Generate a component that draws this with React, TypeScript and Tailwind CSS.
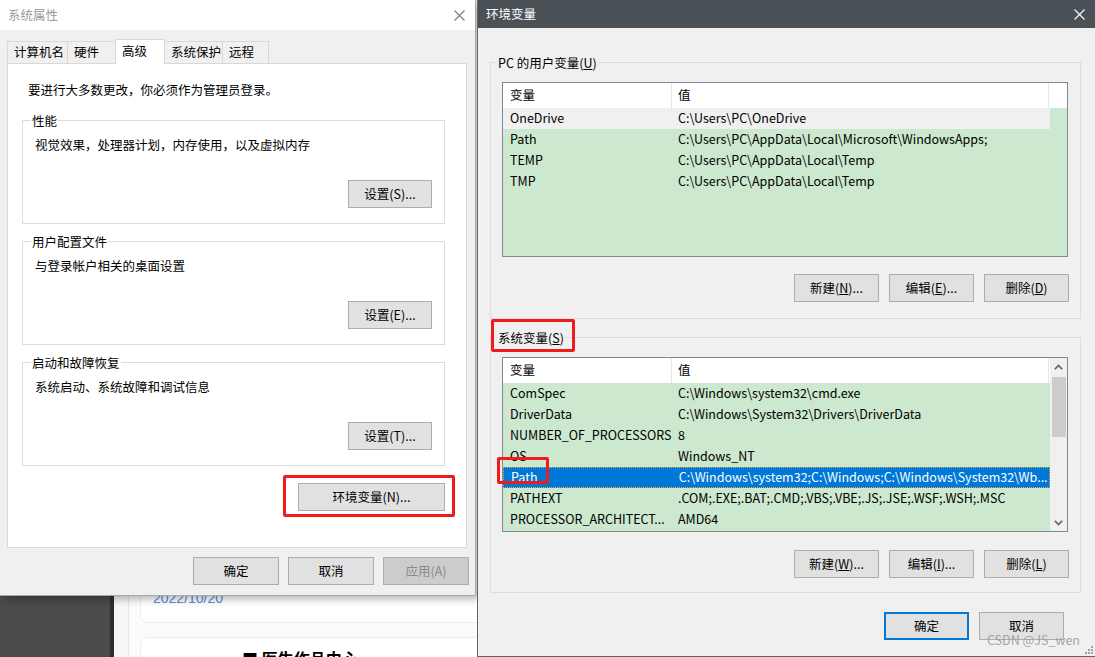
import React from 'react';

const FONT = "font-['Noto_Sans_CJK_SC',sans-serif]";

const USER_VARS: [string, string][] = [
  ['OneDrive', 'C:\\Users\\PC\\OneDrive'],
  ['Path', 'C:\\Users\\PC\\AppData\\Local\\Microsoft\\WindowsApps;'],
  ['TEMP', 'C:\\Users\\PC\\AppData\\Local\\Temp'],
  ['TMP', 'C:\\Users\\PC\\AppData\\Local\\Temp'],
];

const SYS_VARS: [string, string][] = [
  ['ComSpec', 'C:\\Windows\\system32\\cmd.exe'],
  ['DriverData', 'C:\\Windows\\System32\\Drivers\\DriverData'],
  ['NUMBER_OF_PROCESSORS', '8'],
  ['OS', 'Windows_NT'],
  ['Path', 'C:\\Windows\\system32;C:\\Windows;C:\\Windows\\System32\\Wb...'],
  ['PATHEXT', '.COM;.EXE;.BAT;.CMD;.VBS;.VBE;.JS;.JSE;.WSF;.WSH;.MSC'],
  ['PROCESSOR_ARCHITECT...', 'AMD64'],
];

function CloseIcon({ color }: { color: string }) {
  return (
    <svg width="11" height="11" viewBox="0 0 11 11">
      <path d="M0.5 0.5 L10.5 10.5 M10.5 0.5 L0.5 10.5" stroke={color} strokeWidth="1.1" />
    </svg>
  );
}

function WinButton({
  children,
  className = '',
  disabled = false,
  primary = false,
}: {
  children: React.ReactNode;
  className?: string;
  disabled?: boolean;
  primary?: boolean;
}) {
  return (
    <button
      className={`flex items-center justify-center leading-none ${
        primary ? 'border-2 border-[#0078d7]' : 'border border-[#adadad]'
      } ${disabled ? 'bg-[#cccccc] text-[#8a8a8a]' : 'bg-[#e1e1e1] text-black'} ${className}`}
    >
      {children}
    </button>
  );
}

/* Group box of the System Properties panel */
function SettingsGroup({ title, desc, button }: { title: string; desc: string; button: string }) {
  return (
    <fieldset className="h-[112px] w-[423px] border border-[#dcdcdc] px-[8px]">
      <legend className="px-[1px] leading-[17px] text-black">{title}</legend>
      <div className="px-[4px]">
        <p className="mt-[7px] leading-[17px]">{desc}</p>
        <div className="mt-[27px] flex justify-end">
          <WinButton className="h-[28px] w-[84px]">{button}</WinButton>
        </div>
      </div>
    </fieldset>
  );
}

function ListHeader() {
  return (
    <div className="flex h-[25px] items-center bg-white">
      <div className="flex h-full w-[169px] items-center border-r border-[#e5e5e5] pl-[7px]">变量</div>
      <div className="flex h-full w-[377px] items-center border-r border-[#e5e5e5] pl-[6px]">值</div>
    </div>
  );
}

function VarRow({ name, value, hover, selected }: { name: string; value: string; hover?: boolean; selected?: boolean }) {
  return (
    <div
      className={`flex h-[21px] w-[547px] items-center whitespace-nowrap ${
        selected
          ? 'border border-dotted border-[#f7a23b] bg-[#0078d7] text-white'
          : hover
          ? 'bg-[#f0f0f0]'
          : ''
      }`}
    >
      <div className="w-[169px] overflow-hidden pl-[7px]">{name}</div>
      <div className="w-[377px] overflow-hidden pl-[6px]">{value}</div>
    </div>
  );
}

function Chevron({ up }: { up?: boolean }) {
  return (
    <svg width="9" height="6" viewBox="0 0 9 6">
      <path d={up ? 'M0.8 5.2 L4.5 1.5 L8.2 5.2' : 'M0.8 0.8 L4.5 4.5 L8.2 0.8'} stroke="#606060" strokeWidth="1.6" fill="none" />
    </svg>
  );
}

function UserList() {
  return (
    <div className="h-[175px] w-[566px] overflow-hidden border border-[#828790] bg-[#cce8cf]">
      <div className="flex bg-white">
        <ListHeader />
      </div>
      {USER_VARS.map(([n, v], i) => (
        <VarRow key={n} name={n} value={v} hover={i === 0} />
      ))}
    </div>
  );
}

function SystemList() {
  return (
    <div className="flex h-[175px] w-[566px] overflow-hidden border border-[#828790] bg-[#cce8cf]">
      <div className="w-[547px]">
        <ListHeader />
        {SYS_VARS.map(([n, v], i) => (
          <VarRow key={n + i} name={n} value={v} selected={i === 4} />
        ))}
      </div>
      <div className="flex w-[17px] flex-col items-center bg-[#f0f0f0]">
        <div className="flex h-[17px] items-center justify-center">
          <Chevron up />
        </div>
        <div className="mt-[2px] h-[60px] w-[14px] bg-[#cdcdcd]" />
        <div className="flex-1" />
        <div className="flex h-[17px] items-center justify-center">
          <Chevron />
        </div>
      </div>
    </div>
  );
}

function SystemProperties() {
  const tabs = [
    { label: '计算机名', w: 'w-[61px]' },
    { label: '硬件', w: 'w-[49px]' },
    { label: '高级', w: 'w-[50px]', active: true },
    { label: '系统保护', w: 'w-[59px]' },
    { label: '远程', w: 'w-[47px]' },
  ];
  return (
    <div className="absolute left-0 top-0 w-[476px] border-r border-b border-[#a9a9a9] shadow-[3px_3px_8px_rgba(0,0,0,0.3)]">
      {/* Title bar */}
      <div className="flex h-[30px] items-center justify-between bg-white pl-[8px] pr-[10px]">
        <span className="text-[#999999]">系统属性</span>
        <CloseIcon color="#7a7a7a" />
      </div>

      <div className="h-[565px] bg-[#f0f0f0] pl-[7px] pr-[8px] pt-[9px]">
        {/* Tabs */}
        <div className="relative z-10 flex h-[24px] items-end">
          {tabs.map((t) =>
            t.active ? (
              <div
                key={t.label}
                className={`${t.w} -mb-[1px] -ml-[1px] flex h-[25px] items-start border border-b-0 border-[#d9d9d9] bg-white pl-[6px] pt-[2px]`}
              >
                {t.label}
              </div>
            ) : (
              <div
                key={t.label}
                className={`${t.w} flex h-[22px] items-center border border-b-0 border-[#d9d9d9] bg-[#f0f0f0] pl-[6px] -ml-[1px] first:ml-0`}
              >
                {t.label}
              </div>
            )
          )}
        </div>

        {/* Tab panel */}
        <div className="flex h-[485px] flex-col border border-[#d9d9d9] bg-white px-[14px] pt-[17px]">
          <p className="pl-[6px] leading-[17px]">要进行大多数更改，你必须作为管理员登录。</p>
          <div className="mt-[14px] flex flex-col gap-[9px]">
            <SettingsGroup title="性能" desc="视觉效果，处理器计划，内存使用，以及虚拟内存" button="设置(S)..." />
            <SettingsGroup title="用户配置文件" desc="与登录帐户相关的桌面设置" button="设置(E)..." />
            <SettingsGroup title="启动和故障恢复" desc="系统启动、系统故障和调试信息" button="设置(T)..." />
          </div>
          <div className="-mr-[3px] mt-[9px] self-end rounded-[2px] border-[3px] border-[#ef1c1c] pb-[3px] pl-[12px] pr-[7px] pt-[5px]">
            <WinButton className="h-[28px] w-[147px]">环境变量(N)...</WinButton>
          </div>
        </div>

        {/* Dialog buttons */}
        <div className="-mr-[2px] mt-[9px] flex justify-end gap-[9px]">
          <WinButton className="h-[28px] w-[86px]">确定</WinButton>
          <WinButton className="h-[28px] w-[86px]">取消</WinButton>
          <WinButton className="h-[28px] w-[86px]" disabled>
            应用(A)
          </WinButton>
        </div>
      </div>
    </div>
  );
}

function EnvironmentVariables() {
  return (
    <div className="absolute left-[477px] top-0 h-[657px] w-[618px] border-b border-l border-[#5f656b] bg-[#f0f0f0]">
      {/* Title bar */}
      <div className="flex h-[28px] items-center justify-between bg-[#4a5157] pl-[8px] pr-[10px] text-white">
        <span>环境变量</span>
        <CloseIcon color="#ffffff" />
      </div>

      {/* User variables */}
      <fieldset className="ml-[12px] mt-[26px] h-[265px] w-[591px] border border-[#dcdcdc] px-[6px]">
        <legend className="px-[1px] leading-[17px]">
          PC 的用户变量(<u>U</u>)
        </legend>
        <div className="px-[5px]">
          <div className="mt-[11px]">
            <UserList />
          </div>
          <div className="mt-[17px] flex justify-end gap-[10px]">
            <WinButton className="h-[28px] w-[85px]">
              新建(<u>N</u>)...
            </WinButton>
            <WinButton className="h-[28px] w-[85px]">
              编辑(<u>E</u>)...
            </WinButton>
            <WinButton className="h-[28px] w-[85px]">
              删除(<u>D</u>)
            </WinButton>
          </div>
        </div>
      </fieldset>

      {/* System variables */}
      <fieldset className="ml-[12px] mt-[10px] h-[264px] w-[591px] border border-[#dcdcdc] px-[6px]">
        <legend className="px-[1px] leading-[17px]">
          系统变量(<u>S</u>)
        </legend>
        <div className="px-[5px]">
          <div className="mt-[11px]">
            <SystemList />
          </div>
          <div className="mt-[18px] flex justify-end gap-[10px]">
            <WinButton className="h-[28px] w-[85px]">
              新建(<u>W</u>)...
            </WinButton>
            <WinButton className="h-[28px] w-[85px]">
              编辑(<u>I</u>)...
            </WinButton>
            <WinButton className="h-[28px] w-[85px]">
              删除(<u>L</u>)
            </WinButton>
          </div>
        </div>
      </fieldset>

      <div className="mt-[19px] flex justify-end gap-[10px] pr-[31px]">
        <WinButton className="h-[28px] w-[85px]" primary>
          确定
        </WinButton>
        <WinButton className="h-[28px] w-[85px]">取消</WinButton>
      </div>

      {/* Annotation boxes */}
      <div className="absolute left-[13px] top-[319px] h-[33px] w-[84px] rounded-[2px] border-[3px] border-[#ef1c1c]" />
      <div className="absolute left-[19px] top-[457px] h-[27px] w-[52px] rounded-[2px] border-[3px] border-[#ef1c1c]" />

      {/* Watermark */}
      <div className="absolute bottom-[6px] right-[15px] text-[12.5px] text-[#9a9a9a]/90">CSDN @JS_wen</div>

      {/* Resize grip */}
      <svg className="absolute bottom-[1px] right-[1px]" width="10" height="10" viewBox="0 0 10 10">
        <rect x="7" y="1" width="2" height="2" fill="#a0a0a0" />
        <rect x="4" y="4" width="2" height="2" fill="#a0a0a0" />
        <rect x="7" y="4" width="2" height="2" fill="#a0a0a0" />
        <rect x="1" y="7" width="2" height="2" fill="#a0a0a0" />
        <rect x="4" y="7" width="2" height="2" fill="#a0a0a0" />
        <rect x="7" y="7" width="2" height="2" fill="#a0a0a0" />
      </svg>
    </div>
  );
}

export default function App() {
  return (
    <div className={`relative flex h-[657px] w-[1095px] overflow-hidden text-[12.5px] text-black ${FONT}`}>
      {/* Page behind the dialogs */}
      <div className="w-[110px] bg-[#4b4b4b]" />
      <div className="w-[4px] bg-[#2f2f2f]" />
      <div className="flex-1 bg-[#f7f7f7] pl-[14px]">
        <div className="h-full border-l border-[#e6e6e6] bg-[#fbfbfb] pl-[11px]">
          <div className="mt-[520px] flex h-[103px] items-end rounded-[8px] border border-[#ececec] bg-white pb-[14px] pl-[12px] font-['Liberation_Sans',sans-serif] text-[14px] leading-[20px] text-[#5a8dd6]">
            2022/10/20
          </div>
          <div className="mt-[14px] h-[80px] rounded-[8px] border border-[#ececec] bg-white pl-[101px] pt-[10px] text-[16px] font-bold leading-[20px]">
            ■ 医生作品中心
          </div>
        </div>
      </div>

      <SystemProperties />
      <EnvironmentVariables />
    </div>
  );
}
